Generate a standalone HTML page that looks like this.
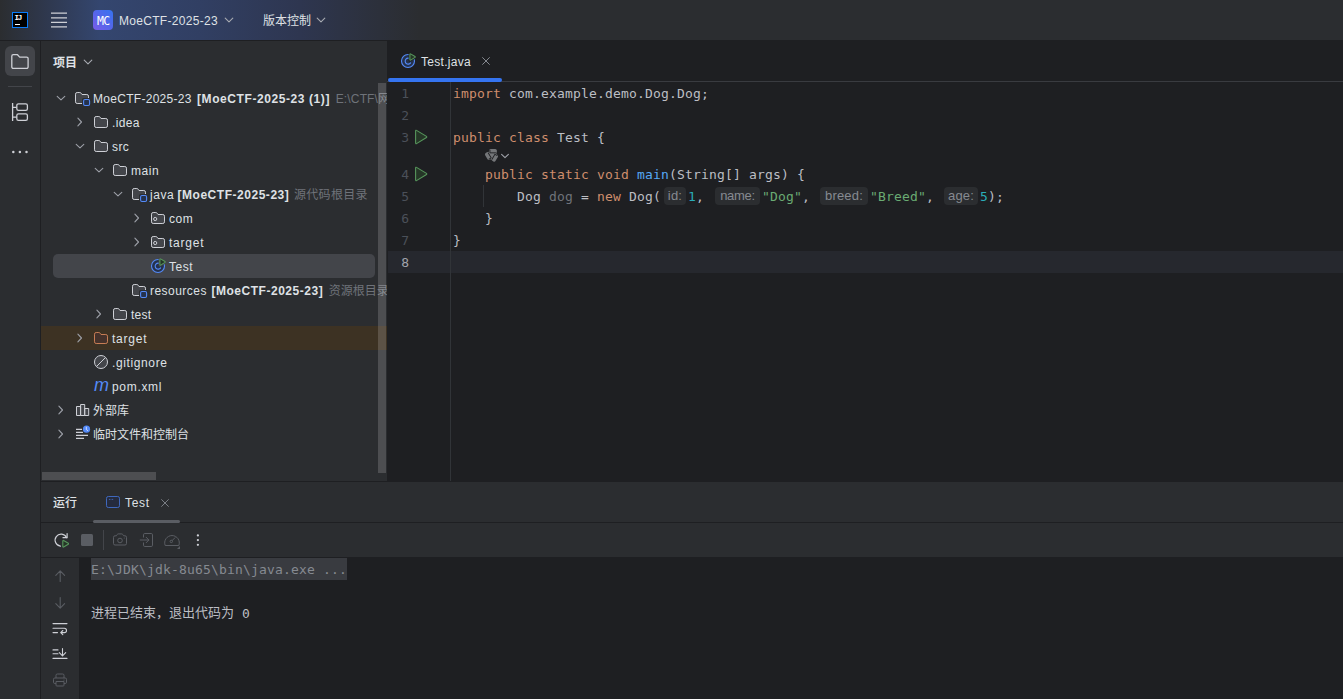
<!DOCTYPE html>
<html lang="zh-CN">
<head>
<meta charset="utf-8">
<title>MoeCTF-2025-23 – Test.java</title>
<style>
*{box-sizing:border-box;margin:0;padding:0}
html,body{width:1343px;height:699px;overflow:hidden;background:#2b2d30}
body{position:relative;font-family:"Liberation Sans","Noto Sans CJK SC",sans-serif;font-size:12px;color:#dfe1e5;-webkit-font-smoothing:antialiased}
.abs{position:absolute}
svg{position:absolute;overflow:visible}
.t{position:absolute;white-space:pre;line-height:16px;height:16px}
/* title bar */
#titlebar{left:0;top:0;width:1343px;height:40px;background:linear-gradient(to right,#2b2d30 0px,#2f3950 50px,#34466f 100px,#313f63 200px,#2e3650 300px,#2b2d30 420px)}
#tb-border{left:0;top:40px;width:1343px;height:1px;background:#1e1f22}
/* left stripe */
#stripe{left:0;top:41px;width:40px;height:658px;background:#2b2d30}
#stripe-border{left:40px;top:41px;width:1px;height:658px;background:#1e1f22}
/* project */
#project{left:41px;top:41px;width:346px;height:440px;background:#2b2d30;overflow:hidden}
.row{position:absolute;left:0;width:346px;height:24px}
.row .t{top:4px}
.gray{color:#6f737a}
b{font-weight:bold}
/* editor */
#editor{left:387px;top:41px;width:956px;height:440px;background:#1e1f22;overflow:hidden}
.code{position:absolute;white-space:pre;font-family:"DejaVu Sans Mono","Liberation Mono","Noto Sans CJK SC",monospace;font-size:13px;letter-spacing:0.172px;line-height:22px;height:22px;color:#bcbec4;left:66px;margin-top:1px}
.ln{position:absolute;left:0;width:22px;text-align:right;font-family:"DejaVu Sans Mono","Liberation Mono",monospace;font-size:13px;line-height:22px;height:22px;color:#4b5059;margin-top:1px}
.k{color:#cf8e6d}.s{color:#6aab73}.n{color:#2aacb8}.f{color:#56a8f5}.u{color:#6f737a}
.hint{display:inline-block;vertical-align:top;height:18px;margin-top:1px;border-radius:4px;background:#2b2d30;color:#868a91;font-family:"Liberation Sans",sans-serif;font-size:13px;line-height:18px;text-align:center}
/* bottom */
#hsplit{left:41px;top:481px;width:1302px;height:1px;background:#1e1f22}
#bottom{left:41px;top:482px;width:1302px;height:217px;background:#2b2d30;overflow:hidden}
.con{position:absolute;white-space:pre;margin-top:1px;font-family:"DejaVu Sans Mono","Liberation Mono","Noto Sans CJK SC",monospace;font-size:13px;letter-spacing:0.172px;line-height:22px;height:22px;color:#bcbec4}
</style>
</head>
<body>

<!-- ============ TITLE BAR ============ -->
<div id="titlebar" class="abs">
  <!-- IJ logo -->
  <div class="abs" style="left:12px;top:12px;width:16px;height:16px;background:#000;border:1px solid #087cfa"></div>
  <div class="t" style="left:14.5px;top:13.8px;font-family:'Liberation Mono',monospace;font-weight:bold;font-size:7.5px;line-height:9px;height:9px;color:#fff;letter-spacing:-1.3px">IJ</div>
  <div class="abs" style="left:15px;top:24px;width:5px;height:1px;background:#fff"></div>
  <!-- hamburger -->
  <svg style="left:50px;top:10px" width="20" height="20" viewBox="0 0 20 20"><path d="M1 3.2h16M1 7.8h16M1 12.3h16M1 16.9h16" stroke="#ced0d6" stroke-width="1.3" fill="none"/></svg>
  <!-- project icon -->
  <div class="abs" style="left:93px;top:10px;width:20px;height:20px;border-radius:4px;background:linear-gradient(45deg,#7a5bea 0%,#5566ea 50%,#3574f0 100%)"></div>
  <div class="t" style="left:93.2px;top:12.7px;width:20px;text-align:center;font-family:'DejaVu Sans Mono','Liberation Mono',monospace;font-size:11.5px;color:#fff;letter-spacing:-0.7px;transform:scaleY(1.08)">MC</div>
  <div class="t" id="tb-proj" style="left:119px;top:13px;letter-spacing:0.3px">MoeCTF-2025-23</div>
  <svg style="left:224px;top:15px" width="10" height="10" viewBox="0 0 10 10"><path d="M1.2 3.2L5 6.8L8.8 3.2" stroke="#a8abb2" stroke-width="1.1" fill="none" stroke-linecap="round" stroke-linejoin="round"/></svg>
  <div class="t" id="tb-vcs" style="left:263px;top:13px">版本控制</div>
  <svg style="left:316px;top:15px" width="10" height="10" viewBox="0 0 10 10"><path d="M1.2 3.2L5 6.8L8.8 3.2" stroke="#a8abb2" stroke-width="1.1" fill="none" stroke-linecap="round" stroke-linejoin="round"/></svg>
</div>
<div id="tb-border" class="abs"></div>

<!-- ============ LEFT STRIPE ============ -->
<div id="stripe" class="abs">
  <div class="abs" style="left:5px;top:5px;width:30px;height:30px;border-radius:6px;background:#43454a"></div>
  <svg style="left:10px;top:10px" width="20" height="20" viewBox="0 0 20 20"><path d="M1.8 5.2a1.5 1.5 0 0 1 1.5-1.5h4.2l2.2 2.4h6.9a1.5 1.5 0 0 1 1.5 1.5v8.3a1.5 1.5 0 0 1-1.5 1.5H3.3a1.5 1.5 0 0 1-1.5-1.5z" stroke="#ced0d6" stroke-width="1.3" fill="none" stroke-linejoin="round"/></svg>
  <div class="abs" style="left:8px;top:45px;width:24px;height:1px;background:#43454a"></div>
  <svg style="left:10px;top:60px" width="20" height="22" viewBox="0 0 20 22"><path d="M2.6 2v18M2.6 6.4h4M2.6 16.2h4" stroke="#ced0d6" stroke-width="1.3" fill="none"/><rect x="6.8" y="2.8" width="10.6" height="6.6" rx="1.6" stroke="#ced0d6" stroke-width="1.3" fill="none"/><rect x="6.8" y="12.8" width="10.6" height="6.6" rx="1.6" stroke="#ced0d6" stroke-width="1.3" fill="none"/></svg>
  <svg style="left:10px;top:101px" width="20" height="20" viewBox="0 0 20 20"><circle cx="3.3" cy="10" r="1.25" fill="#ced0d6"/><circle cx="9.9" cy="10" r="1.25" fill="#ced0d6"/><circle cx="16.5" cy="10" r="1.25" fill="#ced0d6"/></svg>
</div>
<div id="stripe-border" class="abs"></div>

<!-- ============ PROJECT PANEL ============ -->
<div id="project" class="abs">
  <div class="t" style="left:12px;top:13.8px;font-weight:bold">项目</div>
  <svg style="left:42px;top:16px" width="10" height="10" viewBox="0 0 10 10"><path d="M1.2 3.2L5 6.8L8.8 3.2" stroke="#a8abb2" stroke-width="1.1" fill="none" stroke-linecap="round" stroke-linejoin="round"/></svg>
  <svg style="left:15px;top:52px" width="10" height="10" viewBox="0 0 10 10"><path d="M1.2 3.3L5 6.8L8.8 3.3" stroke="#9da0a8" stroke-width="1.1" fill="none" stroke-linecap="round" stroke-linejoin="round"/></svg><svg style="left:33px;top:49px" width="16" height="16" viewBox="0 0 16 16"><path d="M1.5 4.2a1.7 1.7 0 0 1 1.7-1.7h2.6c.5 0 .9.2 1.2.6l1 1.4h4.8a1.7 1.7 0 0 1 1.7 1.7V8H9.6a1.6 1.6 0 0 0-1.6 1.6v3.9H3.2a1.7 1.7 0 0 1-1.7-1.7z" fill="#43454a"/><path d="M8 13.5H3.2a1.7 1.7 0 0 1-1.7-1.7V4.2a1.7 1.7 0 0 1 1.7-1.7h2.6c.5 0 .9.2 1.2.6l1 1.4h4.8a1.7 1.7 0 0 1 1.7 1.7V8" stroke="#ced0d6" fill="none" stroke-width="1"/><rect x="9.6" y="9.5" width="6" height="6" rx="1.4" fill="#25324d" stroke="#548af7" stroke-width="1.1"/></svg><div class="t" style="left:52px;top:50px;letter-spacing:0.29px">MoeCTF-2025-23</div><div class="t" style="left:156px;top:50px;letter-spacing:0.58px;font-weight:bold">[MoeCTF-2025-23 (1)]</div><div class="t" style="left:294.7px;top:50px;letter-spacing:0.15px;color:#6f737a">E:\CTF\网</div>
<svg style="left:34px;top:76px" width="10" height="10" viewBox="0 0 10 10"><path d="M2.9 1.2L6.5 5L2.9 8.8" stroke="#9da0a8" stroke-width="1.1" fill="none" stroke-linecap="round" stroke-linejoin="round"/></svg><svg style="left:52px;top:73px" width="16" height="16" viewBox="0 0 16 16"><path d="M1.5 4.2a1.7 1.7 0 0 1 1.7-1.7h2.6c.5 0 .9.2 1.2.6l1 1.4h4.8a1.7 1.7 0 0 1 1.7 1.7v5.6a1.7 1.7 0 0 1-1.7 1.7H3.2a1.7 1.7 0 0 1-1.7-1.7z" stroke="#ced0d6" fill="#43454a" stroke-width="1"/></svg><div class="t" style="left:71px;top:74px;letter-spacing:0.33px">.idea</div>
<svg style="left:34px;top:100px" width="10" height="10" viewBox="0 0 10 10"><path d="M1.2 3.3L5 6.8L8.8 3.3" stroke="#9da0a8" stroke-width="1.1" fill="none" stroke-linecap="round" stroke-linejoin="round"/></svg><svg style="left:52px;top:97px" width="16" height="16" viewBox="0 0 16 16"><path d="M1.5 4.2a1.7 1.7 0 0 1 1.7-1.7h2.6c.5 0 .9.2 1.2.6l1 1.4h4.8a1.7 1.7 0 0 1 1.7 1.7v5.6a1.7 1.7 0 0 1-1.7 1.7H3.2a1.7 1.7 0 0 1-1.7-1.7z" stroke="#ced0d6" fill="#43454a" stroke-width="1"/></svg><div class="t" style="left:71px;top:98px;letter-spacing:0.4px">src</div>
<svg style="left:53px;top:124px" width="10" height="10" viewBox="0 0 10 10"><path d="M1.2 3.3L5 6.8L8.8 3.3" stroke="#9da0a8" stroke-width="1.1" fill="none" stroke-linecap="round" stroke-linejoin="round"/></svg><svg style="left:71px;top:121px" width="16" height="16" viewBox="0 0 16 16"><path d="M1.5 4.2a1.7 1.7 0 0 1 1.7-1.7h2.6c.5 0 .9.2 1.2.6l1 1.4h4.8a1.7 1.7 0 0 1 1.7 1.7v5.6a1.7 1.7 0 0 1-1.7 1.7H3.2a1.7 1.7 0 0 1-1.7-1.7z" stroke="#ced0d6" fill="#43454a" stroke-width="1"/></svg><div class="t" style="left:90px;top:122px;letter-spacing:0.53px">main</div>
<svg style="left:72px;top:148px" width="10" height="10" viewBox="0 0 10 10"><path d="M1.2 3.3L5 6.8L8.8 3.3" stroke="#9da0a8" stroke-width="1.1" fill="none" stroke-linecap="round" stroke-linejoin="round"/></svg><svg style="left:90px;top:145px" width="16" height="16" viewBox="0 0 16 16"><path d="M1.5 4.2a1.7 1.7 0 0 1 1.7-1.7h2.6c.5 0 .9.2 1.2.6l1 1.4h4.8a1.7 1.7 0 0 1 1.7 1.7V8H9.6a1.6 1.6 0 0 0-1.6 1.6v3.9H3.2a1.7 1.7 0 0 1-1.7-1.7z" fill="#43454a"/><path d="M8 13.5H3.2a1.7 1.7 0 0 1-1.7-1.7V4.2a1.7 1.7 0 0 1 1.7-1.7h2.6c.5 0 .9.2 1.2.6l1 1.4h4.8a1.7 1.7 0 0 1 1.7 1.7V8" stroke="#ced0d6" fill="none" stroke-width="1"/><rect x="9.6" y="9.5" width="6" height="6" rx="1.4" fill="#25324d" stroke="#548af7" stroke-width="1.1"/></svg><div class="t" style="left:109px;top:146px;letter-spacing:0.55px">java</div><div class="t" style="left:136.5px;top:146px;letter-spacing:0.53px;font-weight:bold">[MoeCTF-2025-23]</div><div class="t" style="left:253px;top:146px;letter-spacing:0.3px;color:#6f737a">源代码根目录</div>
<svg style="left:91px;top:172px" width="10" height="10" viewBox="0 0 10 10"><path d="M2.9 1.2L6.5 5L2.9 8.8" stroke="#9da0a8" stroke-width="1.1" fill="none" stroke-linecap="round" stroke-linejoin="round"/></svg><svg style="left:109px;top:169px" width="16" height="16" viewBox="0 0 16 16"><path d="M1.5 4.2a1.7 1.7 0 0 1 1.7-1.7h2.6c.5 0 .9.2 1.2.6l1 1.4h4.8a1.7 1.7 0 0 1 1.7 1.7v5.6a1.7 1.7 0 0 1-1.7 1.7H3.2a1.7 1.7 0 0 1-1.7-1.7z" stroke="#ced0d6" fill="#43454a" stroke-width="1"/><circle cx="5.2" cy="9" r="1.6" stroke="#ced0d6" fill="none" stroke-width="1"/></svg><div class="t" style="left:128px;top:170px;letter-spacing:0.6px">com</div>
<svg style="left:91px;top:196px" width="10" height="10" viewBox="0 0 10 10"><path d="M2.9 1.2L6.5 5L2.9 8.8" stroke="#9da0a8" stroke-width="1.1" fill="none" stroke-linecap="round" stroke-linejoin="round"/></svg><svg style="left:109px;top:193px" width="16" height="16" viewBox="0 0 16 16"><path d="M1.5 4.2a1.7 1.7 0 0 1 1.7-1.7h2.6c.5 0 .9.2 1.2.6l1 1.4h4.8a1.7 1.7 0 0 1 1.7 1.7v5.6a1.7 1.7 0 0 1-1.7 1.7H3.2a1.7 1.7 0 0 1-1.7-1.7z" stroke="#ced0d6" fill="#43454a" stroke-width="1"/><circle cx="5.2" cy="9" r="1.6" stroke="#ced0d6" fill="none" stroke-width="1"/></svg><div class="t" style="left:128px;top:194px;letter-spacing:0.76px">target</div>
<div class="abs" style="left:12px;top:213px;width:322px;height:24px;border-radius:5px;background:#43454a"></div><svg style="left:109px;top:217px" width="16" height="16" viewBox="0 0 16 16"><circle cx="8" cy="8" r="6.5" fill="#25324d" stroke="#548af7" stroke-width="1.1"/><path d="M10.6 9.9a3 3 0 1 1-.3-3.9" stroke="#548af7" stroke-width="1.1" fill="none" stroke-linecap="round"/><path d="M9.6 0.4L16.2 4L9.6 7.8z" fill="#43454a" stroke="#43454a" stroke-width="2" stroke-linejoin="round"/><path d="M9.9 1.3c0-.4.4-.6.7-.4l4.4 2.6c.3.2.3.7 0 .9l-4.4 2.7c-.3.2-.7 0-.7-.4z" fill="#253627" stroke="#57965c" stroke-width="1.1" stroke-linejoin="round"/></svg><div class="t" style="left:128px;top:218px;letter-spacing:0.5px">Test</div>
<svg style="left:90px;top:241px" width="16" height="16" viewBox="0 0 16 16"><path d="M1.5 4.2a1.7 1.7 0 0 1 1.7-1.7h2.6c.5 0 .9.2 1.2.6l1 1.4h4.8a1.7 1.7 0 0 1 1.7 1.7V8H9.6a1.6 1.6 0 0 0-1.6 1.6v3.9H3.2a1.7 1.7 0 0 1-1.7-1.7z" fill="#43454a"/><path d="M8 13.5H3.2a1.7 1.7 0 0 1-1.7-1.7V4.2a1.7 1.7 0 0 1 1.7-1.7h2.6c.5 0 .9.2 1.2.6l1 1.4h4.8a1.7 1.7 0 0 1 1.7 1.7V8" stroke="#ced0d6" fill="none" stroke-width="1"/><rect x="9.6" y="9.5" width="6" height="6" rx="1.4" fill="#25324d" stroke="#548af7" stroke-width="1.1"/></svg><div class="t" style="left:109px;top:242px;letter-spacing:0.47px">resources</div><div class="t" style="left:170.4px;top:242px;letter-spacing:0.53px;font-weight:bold">[MoeCTF-2025-23]</div><div class="t" style="left:287.7px;top:242px;color:#6f737a">资源根目录</div>
<svg style="left:53px;top:268px" width="10" height="10" viewBox="0 0 10 10"><path d="M2.9 1.2L6.5 5L2.9 8.8" stroke="#9da0a8" stroke-width="1.1" fill="none" stroke-linecap="round" stroke-linejoin="round"/></svg><svg style="left:71px;top:265px" width="16" height="16" viewBox="0 0 16 16"><path d="M1.5 4.2a1.7 1.7 0 0 1 1.7-1.7h2.6c.5 0 .9.2 1.2.6l1 1.4h4.8a1.7 1.7 0 0 1 1.7 1.7v5.6a1.7 1.7 0 0 1-1.7 1.7H3.2a1.7 1.7 0 0 1-1.7-1.7z" stroke="#ced0d6" fill="#43454a" stroke-width="1"/></svg><div class="t" style="left:90px;top:266px;letter-spacing:0.23px">test</div>
<div class="abs" style="left:0;top:285px;width:346px;height:24px;background:#3d3223"></div><svg style="left:34px;top:292px" width="10" height="10" viewBox="0 0 10 10"><path d="M2.9 1.2L6.5 5L2.9 8.8" stroke="#9da0a8" stroke-width="1.1" fill="none" stroke-linecap="round" stroke-linejoin="round"/></svg><svg style="left:52px;top:289px" width="16" height="16" viewBox="0 0 16 16"><path d="M1.5 4.2a1.7 1.7 0 0 1 1.7-1.7h2.6c.5 0 .9.2 1.2.6l1 1.4h4.8a1.7 1.7 0 0 1 1.7 1.7v5.6a1.7 1.7 0 0 1-1.7 1.7H3.2a1.7 1.7 0 0 1-1.7-1.7z" stroke="#c77d55" fill="#45322b" stroke-width="1"/></svg><div class="t" style="left:71px;top:290px;letter-spacing:0.76px">target</div>
<svg style="left:52px;top:313px" width="16" height="16" viewBox="0 0 16 16"><circle cx="8" cy="8" r="6.5" fill="#43454a" stroke="#ced0d6" stroke-width="1"/><path d="M3.6 12.4L12.4 3.6" stroke="#ced0d6" stroke-width="1"/></svg><div class="t" style="left:71px;top:314px;letter-spacing:0.62px">.gitignore</div>
<div class="t" style="left:53px;top:334px;width:16px;height:20px;line-height:20px;font-family:'Liberation Sans',sans-serif;font-style:italic;font-size:18px;color:#548af7;letter-spacing:0">m</div><div class="t" style="left:71px;top:338px;letter-spacing:0.68px">pom.xml</div>
<svg style="left:15px;top:364px" width="10" height="10" viewBox="0 0 10 10"><path d="M2.9 1.2L6.5 5L2.9 8.8" stroke="#9da0a8" stroke-width="1.1" fill="none" stroke-linecap="round" stroke-linejoin="round"/></svg><svg style="left:33px;top:361px" width="16" height="16" viewBox="0 0 16 16"><path d="M2.5 4.5h4.1v9H2.5zM6.6 2.5h4.1v11H6.6zM10.7 6.5h4v7h-4z" stroke="#ced0d6" stroke-width="1" fill="#43454a" stroke-linejoin="round"/></svg><div class="t" style="left:52px;top:362px">外部库</div>
<svg style="left:15px;top:388px" width="10" height="10" viewBox="0 0 10 10"><path d="M2.9 1.2L6.5 5L2.9 8.8" stroke="#9da0a8" stroke-width="1.1" fill="none" stroke-linecap="round" stroke-linejoin="round"/></svg><svg style="left:33px;top:385px" width="16" height="16" viewBox="0 0 16 16"><path d="M2 3.4h6M2 6.4h7M2 9.4h12M2 12.4h8" stroke="#ced0d6" stroke-width="1.1" fill="none"/><circle cx="12.5" cy="3.2" r="4.4" fill="#2b2d30"/><circle cx="12.5" cy="3.2" r="3.6" fill="#548af7"/><path d="M12.3 1.2v2.3l1.3 1" stroke="#dfe6ff" stroke-width="0.9" fill="none" stroke-linecap="round"/></svg><div class="t" style="left:52px;top:386px">临时文件和控制台</div>
<div class="abs" style="left:337px;top:42px;width:8px;height:390px;background:rgba(255,255,255,0.16)"></div>
<div class="abs" style="left:1px;top:431px;width:114px;height:8px;background:rgba(255,255,255,0.16)"></div>
</div>

<!-- ============ EDITOR ============ -->
<div id="editor" class="abs">
  <!-- tab -->
  <svg style="left:13px;top:12px" width="16" height="16" viewBox="0 0 16 16"><circle cx="8" cy="8" r="6.5" fill="#25324d" stroke="#548af7" stroke-width="1.1"/><path d="M10.6 9.9a3 3 0 1 1-.3-3.9" stroke="#548af7" stroke-width="1.1" fill="none" stroke-linecap="round"/><path d="M9.6 0.4L16.2 4L9.6 7.8z" fill="#1e1f22" stroke="#1e1f22" stroke-width="2" stroke-linejoin="round"/><path d="M9.9 1.3c0-.4.4-.6.7-.4l4.4 2.6c.3.2.3.7 0 .9l-4.4 2.7c-.3.2-.7 0-.7-.4z" fill="#253627" stroke="#57965c" stroke-width="1.1" stroke-linejoin="round"/></svg>
  <div class="t" style="left:34px;top:13px;letter-spacing:0.29px">Test.java</div>
  <svg style="left:94px;top:15px" width="10" height="10" viewBox="0 0 10 10"><path d="M1.6 1.6L8.4 8.4M8.4 1.6L1.6 8.4" stroke="#868a91" stroke-width="1" fill="none" stroke-linecap="round"/></svg>
  <div class="abs" style="left:0;top:40px;width:956px;height:1px;background:#393b40"></div>
  <div class="abs" style="left:1px;top:37px;width:114px;height:4px;border-radius:2px;background:#3574f0"></div>

  <!-- caret row -->
  <div class="abs" style="left:1px;top:210px;width:955px;height:22px;background:#26282e"></div>
  <!-- gutter separator -->
  <div class="abs" style="left:63px;top:41px;width:1px;height:399px;background:#313438"></div>
  <!-- indent guide -->
  <div class="abs" style="left:96px;top:144px;width:1px;height:22px;background:#313438"></div>

  <!-- line numbers -->
  <div class="ln" style="top:41px">1</div>
  <div class="ln" style="top:63px">2</div>
  <div class="ln" style="top:85px">3</div>
  <div class="ln" style="top:122px">4</div>
  <div class="ln" style="top:144px">5</div>
  <div class="ln" style="top:166px">6</div>
  <div class="ln" style="top:188px">7</div>
  <div class="ln" style="top:210px;color:#a1a3ab">8</div>

  <!-- run gutter icons -->
  <svg style="left:26px;top:88px" width="16" height="16" viewBox="0 0 16 16"><path d="M2.6 1.9c0-.5.5-.8.9-.5l10 6c.4.3.4.9 0 1.1l-10 6.1c-.4.3-.9 0-.9-.5z" fill="#253627" stroke="#57965c" stroke-width="1.1" stroke-linejoin="round"/></svg>
  <svg style="left:26px;top:125px" width="16" height="16" viewBox="0 0 16 16"><path d="M2.6 1.9c0-.5.5-.8.9-.5l10 6c.4.3.4.9 0 1.1l-10 6.1c-.4.3-.9 0-.9-.5z" fill="#253627" stroke="#57965c" stroke-width="1.1" stroke-linejoin="round"/></svg>

  <!-- code -->
  <div class="code" style="top:41px"><span class="k">import</span> com.example.demo.Dog.Dog;</div>
  <div class="code" style="top:85px"><span class="k">public class</span> Test {</div>
  <!-- code vision inlay -->
  <svg style="left:97.5px;top:106.7px" width="14" height="14" viewBox="-7 -7 14 14"><g transform="scale(0.9)"><circle r="5.2" fill="#747679"/><g transform="rotate(0)"><rect x="-3.2" y="-6.7" width="8.6" height="5" rx="1.8" fill="#747679"/></g><g transform="rotate(120)"><rect x="-3.2" y="-6.7" width="8.6" height="5" rx="1.8" fill="#747679"/></g><g transform="rotate(240)"><rect x="-3.2" y="-6.7" width="8.6" height="5" rx="1.8" fill="#747679"/></g><g transform="rotate(0)"><path d="M-2.3-5.6V-2.4H4.4" stroke="#1e1f22" stroke-width="1" fill="none"/></g><g transform="rotate(120)"><path d="M-2.3-5.6V-2.4H4.4" stroke="#1e1f22" stroke-width="1" fill="none"/></g><g transform="rotate(240)"><path d="M-2.3-5.6V-2.4H4.4" stroke="#1e1f22" stroke-width="1" fill="none"/></g></g></svg>
  <svg style="left:112.5px;top:109.5px" width="10" height="10" viewBox="0 0 10 10"><path d="M1.6 3.3L5 6.6L8.4 3.3" stroke="#a0a3aa" stroke-width="1.1" fill="none" stroke-linecap="round" stroke-linejoin="round"/></svg>
  <div class="code" style="top:122px">    <span class="k">public static void</span> <span class="f">main</span>(String[] args) {</div>
  <div class="code" style="top:144px">        Dog <span class="u">dog</span> = <span class="k">new</span> Dog(<span class="hint" style="width:22px;margin-left:3px;margin-right:2px">id:</span><span class="n">1</span>, <span class="hint" style="width:45px;margin-left:3px;margin-right:2px;letter-spacing:-0.3px">name:</span><span class="s">"Dog"</span>, <span class="hint" style="width:48px;margin-left:2px;margin-right:2px">breed:</span><span class="s">"Breed"</span>, <span class="hint" style="width:34px;margin-left:2px;margin-right:2px">age:</span><span class="n">5</span>);</div>
  <div class="code" style="top:166px">    }</div>
  <div class="code" style="top:188px">}</div>

</div>

<!-- ============ BOTTOM (RUN) ============ -->
<div id="hsplit" class="abs"></div>
<div id="bottom" class="abs">
  <!-- header -->
  <div class="t" style="left:12px;top:13px;font-weight:500">运行</div>
  <svg style="left:64px;top:12px" width="16" height="16" viewBox="0 0 16 16"><rect x="1.5" y="2.5" width="13" height="11" rx="1.8" fill="#252b3d" stroke="#3f68bc" stroke-width="1"/><path d="M3.9 5.4h1.5M6.6 5.4h1.6" stroke="#3f62a8" stroke-width="1"/></svg>
  <div class="t" style="left:84px;top:13px;letter-spacing:0.7px">Test</div>
  <svg style="left:119px;top:16px" width="10" height="10" viewBox="0 0 10 10"><path d="M1.6 1.6L8.4 8.4M8.4 1.6L1.6 8.4" stroke="#7a7e85" stroke-width="1" fill="none" stroke-linecap="round"/></svg>
  <div class="abs" style="left:0;top:40px;width:1302px;height:1px;background:#1e1f22"></div>
  <div class="abs" style="left:52px;top:38px;width:87px;height:3px;border-radius:1.5px;background:#5a5d63"></div>

  <!-- toolbar -->
  <!-- rerun -->
  <svg style="left:11px;top:48px" width="20" height="20" viewBox="0 0 20 20"><path d="M8.4 16.1a6 6 0 1 1 6.2-8.4" stroke="#ced0d6" stroke-width="1.2" fill="none" stroke-linecap="round"/><path d="M15.1 3.6v4.1h-4.1" stroke="#ced0d6" stroke-width="1.2" fill="none" stroke-linecap="round" stroke-linejoin="round"/><path d="M10.8 10.9c0-.4.4-.7.8-.4l4.7 2.8c.3.2.3.7 0 .9l-4.7 2.8c-.4.2-.8 0-.8-.4z" fill="#253627" stroke="#57965c" stroke-width="1.1" stroke-linejoin="round"/></svg>
  <!-- stop -->
  <div class="abs" style="left:40px;top:52px;width:12px;height:12px;border-radius:1.5px;background:#5a5d63"></div>
  <div class="abs" style="left:62px;top:48px;width:1px;height:20px;background:#43454a"></div>
  <!-- camera -->
  <svg style="left:69px;top:48px" width="20" height="20" viewBox="0 0 20 20"><path d="M3.5 7.3a1.5 1.5 0 0 1 1.5-1.5h1.4l.9-1.4c.2-.3.5-.5.9-.5h3.6c.4 0 .7.2.9.5l.9 1.4H15a1.5 1.5 0 0 1 1.5 1.5v6.2A1.5 1.5 0 0 1 15 15H5a1.5 1.5 0 0 1-1.5-1.5z" stroke="#5a5d63" stroke-width="1" fill="none" stroke-linejoin="round"/><circle cx="10" cy="10.5" r="2.3" stroke="#5a5d63" stroke-width="1" fill="none"/><circle cx="14.3" cy="8" r=".6" fill="#5a5d63"/></svg>
  <!-- exit -->
  <svg style="left:96px;top:48px" width="20" height="20" viewBox="0 0 20 20"><path d="M6.5 7.5V4.8a1.3 1.3 0 0 1 1.3-1.3h6.4a1.3 1.3 0 0 1 1.3 1.3v10.4a1.3 1.3 0 0 1-1.3 1.3H7.8a1.3 1.3 0 0 1-1.3-1.3V12.5" stroke="#5a5d63" stroke-width="1" fill="none"/><path d="M3.2 10h8.6M9.2 7.3L11.9 10L9.2 12.7" stroke="#5a5d63" stroke-width="1" fill="none" stroke-linecap="round" stroke-linejoin="round"/></svg>
  <!-- gauge -->
  <svg style="left:120px;top:47.5px" width="22" height="22" viewBox="0 0 22 22"><path d="M4.2 15.5a7.3 7.3 0 1 1 13.6 0z" stroke="#5a5d63" stroke-width="1" fill="none" stroke-linejoin="round"/><circle cx="10.3" cy="11.4" r="1.2" stroke="#5a5d63" stroke-width="1" fill="none"/><path d="M11.2 10.5l2.8-2.8" stroke="#5a5d63" stroke-width="1" stroke-linecap="round"/><path d="M19 16v3h-3z" fill="#5a5d63"/></svg>
  <!-- more -->
  <svg style="left:147px;top:48px" width="20" height="20" viewBox="0 0 20 20"><circle cx="9.9" cy="5.4" r="1.15" fill="#ced0d6"/><circle cx="9.9" cy="10.1" r="1.15" fill="#ced0d6"/><circle cx="9.9" cy="14.8" r="1.15" fill="#ced0d6"/></svg>
  <div class="abs" style="left:0;top:75px;width:1302px;height:1px;background:#1e1f22"></div>

  <!-- console -->
  <div class="abs" style="left:38px;top:76px;width:1264px;height:141px;background:#1e1f22"></div>
  <div class="abs" style="left:50px;top:76px;width:256px;height:22px;background:#393b40"></div>
  <div class="con" style="left:50px;top:76px;color:#868a91">E:\JDK\jdk-8u65\bin\java.exe ...</div>
  <div class="con" style="left:50px;top:120px"><span style="font-size:13px;letter-spacing:0;position:relative;top:-1px">进程已结束，退出代码为</span> 0</div>

  <!-- console side icons -->
  <svg style="left:9px;top:84px" width="20" height="20" viewBox="0 0 20 20"><path d="M10.2 15.5V5M5.8 9.3L10.2 4.9L14.6 9.3" stroke="#5a5d63" stroke-width="1.1" fill="none" stroke-linecap="round" stroke-linejoin="round"/></svg>
  <svg style="left:9px;top:110px" width="20" height="20" viewBox="0 0 20 20"><path d="M10.2 5.5V16M5.8 11.7L10.2 16.1L14.6 11.7" stroke="#5a5d63" stroke-width="1.1" fill="none" stroke-linecap="round" stroke-linejoin="round"/></svg>
  <svg style="left:9px;top:136px" width="20" height="20" viewBox="0 0 20 20"><path d="M3 5.6h14M3 10.2h11.3a2.2 2.2 0 0 1 0 4.4h-3.3M3 14.6h4.5M12.8 12.5l-2.1 2.1l2.1 2.1" stroke="#ced0d6" stroke-width="1.1" fill="none" stroke-linecap="round" stroke-linejoin="round"/></svg>
  <svg style="left:9px;top:162px" width="20" height="20" viewBox="0 0 20 20"><path d="M3 5.9h5M3 9.8h5M3 14.4h14M12.5 4.5v7.3M9.3 8.7l3.2 3.2l3.2-3.2" stroke="#ced0d6" stroke-width="1.1" fill="none" stroke-linecap="round" stroke-linejoin="round"/></svg>
  <svg style="left:9px;top:188px" width="20" height="20" viewBox="0 0 20 20"><path d="M6 8V5.3a1.3 1.3 0 0 1 1.3-1.3h5.4A1.3 1.3 0 0 1 14 5.3V8M6 13.5H4.8a1.3 1.3 0 0 1-1.3-1.3V9.3A1.3 1.3 0 0 1 4.8 8h10.4a1.3 1.3 0 0 1 1.3 1.3v2.9a1.3 1.3 0 0 1-1.3 1.3H14M6 11.5h8v3.7a.8.8 0 0 1-.8.8H6.8a.8.8 0 0 1-.8-.8z" stroke="#5a5d63" stroke-width="1" fill="none" stroke-linejoin="round"/><circle cx="14" cy="10" r=".6" fill="#5a5d63"/></svg>

</div>

</body>
</html>
